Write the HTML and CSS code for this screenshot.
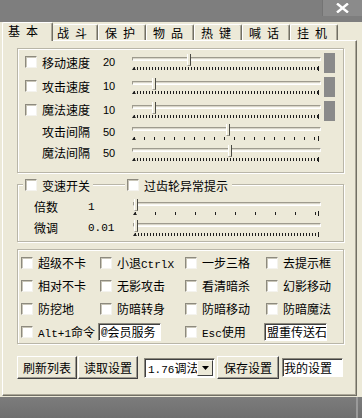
FILE: index.html
```html
<!DOCTYPE html>
<html>
<head>
<meta charset="utf-8">
<link rel="stylesheet" href="styles.css">
</head>
<body>
<div class="titlebar">
  <div class="close">
    <svg width="13" height="10" viewBox="0 0 13 10"><path d="M1 0.5 L12 9.5 M12 0.5 L1 9.5" stroke="#fff" stroke-width="2.4" fill="none"/></svg>
  </div>
</div>
<div class="window">
  <div class="tabs">
    <div class="tab sel">基本</div>
    <div class="tab t2">战斗</div>
    <div class="tab">保护</div>
    <div class="tab">物品</div>
    <div class="tab">热键</div>
    <div class="tab">喊话</div>
    <div class="tab">挂机</div>
  </div>
  <div class="page">
    <div class="group g1">
      <div class="srow">
        <span class="cb"></span><span class="lbl">移动速度</span><span class="num">20</span>
        <div class="slider"><div class="track"></div><div class="thumb" style="left:55px"></div><div class="ticks dense"></div></div>
        <span class="bar"></span>
      </div>
      <div class="srow">
        <span class="cb"></span><span class="lbl">攻击速度</span><span class="num">10</span>
        <div class="slider"><div class="track"></div><div class="thumb" style="left:20px"></div><div class="ticks dense"></div></div>
        <span class="bar"></span>
      </div>
      <div class="srow r3">
        <span class="cb"></span><span class="lbl">魔法速度</span><span class="num">10</span>
        <div class="slider"><div class="track"></div><div class="thumb" style="left:20px"></div><div class="ticks dense"></div></div>
        <span class="bar"></span>
      </div>
      <div class="srow short">
        <span></span><span class="lbl">攻击间隔</span><span class="num">50</span>
        <div class="slider"><div class="track"></div><div class="thumb" style="left:94px"></div><div class="ticks sparse"></div></div>
        <span></span>
      </div>
      <div class="srow short">
        <span></span><span class="lbl">魔法间隔</span><span class="num">50</span>
        <div class="slider"><div class="track"></div><div class="thumb" style="left:96px"></div><div class="ticks dense"></div></div>
        <span></span>
      </div>
    </div>

    <div class="group g2">
      <div class="legend l1"><span class="cb"></span><span>变速开关</span></div>
      <div class="legend l2"><span class="cb"></span><span>过齿轮异常提示</span></div>
      <div class="vrow">
        <span class="lbl">倍数</span><span class="mono">1</span>
        <div class="slider s2"><div class="track"></div><div class="thumb" style="left:1px"></div><div class="ticks wide"></div></div>
      </div>
      <div class="vrow">
        <span class="lbl">微调</span><span class="mono">0.01</span>
        <div class="slider s2"><div class="track"></div><div class="thumb" style="left:1px"></div><div class="ticks dense"></div></div>
      </div>
    </div>

    <div class="group g3">
      <div class="opt"><span class="cb"></span><span>超级不卡</span></div>
      <div class="opt"><span class="cb"></span><span>小退<span class="mono">CtrlX</span></span></div>
      <div class="opt"><span class="cb"></span><span>一步三格</span></div>
      <div class="opt"><span class="cb"></span><span>去提示框</span></div>

      <div class="opt"><span class="cb"></span><span>相对不卡</span></div>
      <div class="opt"><span class="cb"></span><span>无影攻击</span></div>
      <div class="opt"><span class="cb"></span><span>看清暗杀</span></div>
      <div class="opt"><span class="cb"></span><span>幻影移动</span></div>

      <div class="opt"><span class="cb"></span><span>防挖地</span></div>
      <div class="opt"><span class="cb"></span><span>防暗转身</span></div>
      <div class="opt"><span class="cb"></span><span>防暗移动</span></div>
      <div class="opt"><span class="cb"></span><span>防暗魔法</span></div>

      <div class="opt"><span class="cb"></span><span><span class="mono">Alt+1</span>命令</span></div>
      <div class="opt"><span class="field f1"><span class="mono">@</span>会员服务</span></div>
      <div class="opt"><span class="cb"></span><span><span class="mono">Esc</span>使用</span></div>
      <div class="opt"><span class="field f2">盟重传送石</span></div>
    </div>

    <div class="buttons">
      <div class="btn b1">刷新列表</div>
      <div class="btn b2">读取设置</div>
      <div class="select"><span class="seltext"><span class="mono">1.76</span>调法</span><span class="drop"><svg width="7" height="4" viewBox="0 0 7 4"><path d="M0 0 H7 L3.5 4 Z" fill="#000"/></svg></span></div>
      <div class="btn b3">保存设置</div>
      <div class="field f3">我的设置</div>
    </div>
  </div>
</div>
<div class="footer"><span class="edge"></span></div>
</body>
</html>
```

FILE: styles.css
```css
html, body {
  margin: 0;
  padding: 0;
}
body {
  width: 362px;
  height: 418px;
  overflow: hidden;
  background: #7a7a7a;
  font-family: "Noto Sans CJK SC", "Noto Sans", sans-serif;
  font-size: 12px;
  color: #000;
}
.mono {
  font-family: "Liberation Mono", "DejaVu Sans Mono", monospace;
  font-size: 11px;
}
.titlebar {
  height: 22px;
  background: #7e7e7e;
  display: flex;
  justify-content: flex-end;
}
.close {
  width: 39px;
  height: 16px;
  background: #8b8b8b;
  border-left: 1px solid #747474;
  display: flex;
  align-items: center;
  justify-content: center;
}
.window {
  height: 375px;
  background: #ece9d8;
  width: 362px;
}
.tabs {
  display: flex;
  height: 18px;
  padding-left: 2px;
  align-items: flex-end;
  position: relative;
  z-index: 1;
}
.tab {
  box-sizing: border-box;
  width: 48px;
  height: 16px;
  border-top: 1px solid #fff;
  border-left: 1px solid #fff;
  border-right: 1px solid #716f64;
  box-shadow: inset -1px 0 0 #aca899;
  border-top-left-radius: 2px;
  border-top-right-radius: 2px;
  padding-left: 6px;
  letter-spacing: 6px;
  line-height: 15px;
  white-space: nowrap;
}
.tab.sel {
  width: 51px;
  height: 19px;
  margin-bottom: -1px;
  background: #ece9d8;
  line-height: 16px;
  padding-left: 5px;
}
.tab.t2 {
  width: 45px;
  border-left: none;
  padding-left: 4px;
}
.page {
  box-sizing: border-box;
  margin-left: 2px;
  width: 355px;
  height: 356px;
  border-top: 1px solid #fff;
  border-left: 1px solid #fff;
  border-right: 1px solid #716f64;
  border-bottom: 1px solid #716f64;
  box-shadow: inset -1px -1px 0 #aca899;
  padding: 7px 0 0 14px;
}
.group {
  box-sizing: border-box;
  width: 327px;
  border: 1px solid #b9b6a8;
  box-shadow: inset 1px 1px 0 #fff, 1px 1px 0 #fff;
}
.cb {
  box-sizing: border-box;
  width: 12px;
  height: 12px;
  background: #fff;
  border-top: 1px solid #8d8a7e;
  border-left: 1px solid #8d8a7e;
  border-bottom: 1px solid #f4f3ee;
  border-right: 1px solid #f4f3ee;
  box-shadow: inset 1px 1px 0 #c9c6b8;
  display: block;
  flex: none;
}
.g1 {
  padding: 1px 0 9px 7px;
}
.srow {
  display: grid;
  grid-template-columns: 17px 61px 29px 192px 11px;
  align-items: center;
  height: 24px;
}
.srow.r3 { height: 23px; }
.srow.short { height: 21px; }
.lbl { white-space: nowrap; }
.num {
  font-family: "Liberation Sans", Arial, sans-serif;
  font-size: 11px;
}
.bar {
  width: 11px;
  height: 20px;
  margin-top: 2px;
  background: #8a8a8a;
}
.slider {
  position: relative;
  width: 189px;
  height: 16px;
}
.slider.s2 { width: 188px; }
.track {
  box-sizing: border-box;
  margin-top: 3px;
  height: 4px;
  border-top: 1px solid #9e9b8e;
  border-left: 1px solid #9e9b8e;
  border-bottom: 1px solid #fff;
  border-right: 1px solid #fff;
  background: #f7f6f0;
  box-shadow: inset 0 1px 0 #d8d5c8;
}
.thumb {
  position: absolute;
  top: 0;
  width: 2px;
  height: 11px;
  background: #ece9d8;
  border-left: 1px solid #fff;
  border-right: 1px solid #4a4a44;
  border-bottom: 1px solid #9e9b8e;
}
.ticks {
  position: relative;
  margin: 6px 2px 0 2px;
  height: 3px;
}
.ticks.dense {
  background: repeating-linear-gradient(to right, #1e1e1e 0 1px, transparent 1px 3px);
}
.ticks.sparse {
  background: repeating-linear-gradient(to right, #1e1e1e 0 1px, transparent 1px 10px);
}
.ticks.wide {
  background: repeating-linear-gradient(to right, #1e1e1e 0 1px, transparent 1px 20px);
}
.ticks::before {
  content: "";
  position: absolute;
  left: -2px;
  top: 0;
  width: 0;
  height: 0;
  border-left: 2px solid transparent;
  border-right: 2px solid transparent;
  border-bottom: 3px solid #1e1e1e;
}
.ticks::after {
  content: "";
  position: absolute;
  right: 0;
  top: -1px;
  width: 1px;
  height: 5px;
  background: #1e1e1e;
}
.g2 {
  position: relative;
  margin-top: 11px;
  padding: 11px 0 3px 16px;
}
.legend {
  position: absolute;
  top: -8px;
  height: 16px;
  display: flex;
  align-items: center;
  gap: 5px;
  padding: 0 2px;
  background: #ece9d8;
  white-space: nowrap;
}
.legend.l1 { left: 5px; padding-right: 3px; }
.legend.l2 { left: 107px; padding-right: 4px; }
.vrow {
  display: grid;
  grid-template-columns: 54px 45px 188px;
  align-items: center;
  height: 21px;
}
.g3 {
  margin-top: 7px;
  padding: 1px 0 0 3px;
  display: grid;
  grid-template-columns: 79px 85px 81px 1fr;
  grid-auto-rows: 23px;
}
.opt {
  display: flex;
  align-items: center;
  gap: 5px;
  white-space: nowrap;
}
.field {
  box-sizing: border-box;
  display: flex;
  align-items: center;
  background: #fff;
  border-top: 1px solid #8d8a7e;
  border-left: 1px solid #8d8a7e;
  border-bottom: 1px solid #fff;
  border-right: 1px solid #fff;
  box-shadow: inset 1px 1px 0 #404040;
  padding-left: 2px;
  white-space: nowrap;
  overflow: hidden;
}
.field.f1 {
  margin-left: -2px;
  width: 63px;
  height: 18px;
}
.field.f2 {
  margin-left: -2px;
  width: 63px;
  height: 18px;
}
.buttons {
  display: flex;
  align-items: center;
  margin-top: 12px;
  height: 23px;
}
.btn {
  box-sizing: border-box;
  height: 23px;
  display: flex;
  align-items: center;
  justify-content: center;
  border-top: 1px solid #fff;
  border-left: 1px solid #fff;
  border-right: 1px solid #404040;
  border-bottom: 1px solid #404040;
  box-shadow: inset -1px -1px 0 #9d9a8e;
  white-space: nowrap;
}
.btn.b1 { width: 60px; }
.btn.b2 { width: 60px; margin-left: 1px; }
.btn.b3 { width: 62px; margin-left: 2px; }
.select {
  box-sizing: border-box;
  margin-left: 6px;
  width: 71px;
  height: 20px;
  display: flex;
  align-items: center;
  background: #fff;
  border-top: 1px solid #8d8a7e;
  border-left: 1px solid #8d8a7e;
  border-bottom: 1px solid #fff;
  border-right: 1px solid #fff;
  box-shadow: inset 1px 1px 0 #404040;
  padding: 1px 1px 1px 3px;
}
.seltext {
  flex: 1;
  white-space: nowrap;
  overflow: hidden;
}
.drop {
  box-sizing: border-box;
  width: 16px;
  height: 16px;
  background: #ece9d8;
  border-top: 1px solid #fff;
  border-left: 1px solid #fff;
  border-right: 1px solid #404040;
  border-bottom: 1px solid #404040;
  display: flex;
  align-items: center;
  justify-content: center;
}
.field.f3 {
  margin-left: 3px;
  width: 61px;
  height: 19px;
  padding-left: 1px;
}
.footer {
  height: 21px;
  display: flex;
  background: linear-gradient(to bottom, #7c7c7c, #6f6f6f);
}
.edge {
  margin-left: 356px;
  width: 2px;
  background: #9a9a9a;
}
```
